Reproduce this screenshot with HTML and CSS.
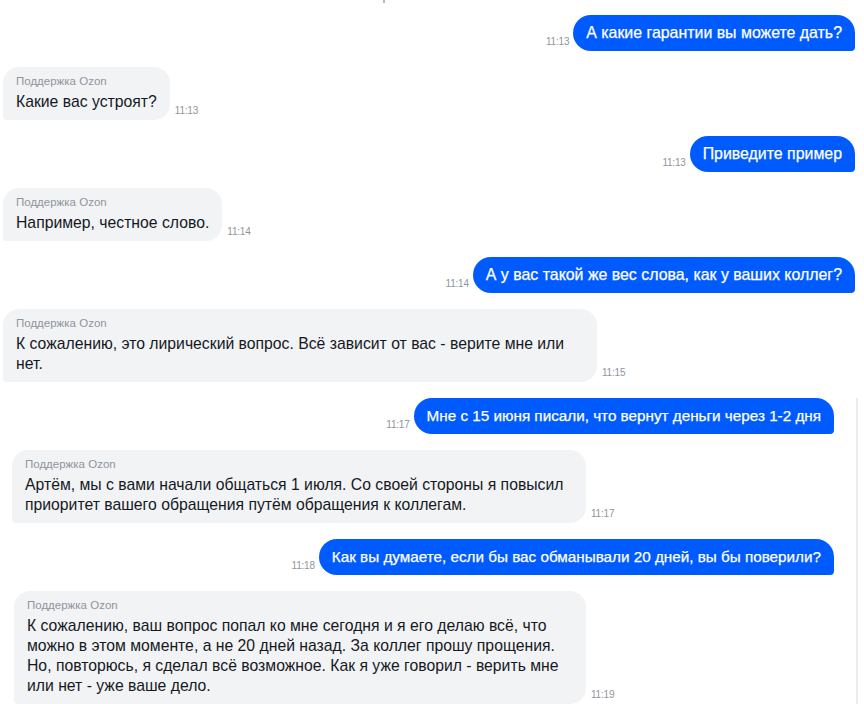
FILE: index.html
```html
<!DOCTYPE html>
<html lang="ru">
<head>
<meta charset="utf-8">
<title>Чат поддержки Ozon</title>
<link rel="stylesheet" href="styles.css">
</head>
<body>
<div class="chat">
  <div class="stub"><span class="stub-mark"></span></div>

  <div class="row out">
    <span class="time">11:13</span>
    <div class="bubble bubble-out">А какие гарантии вы можете дать?</div>
  </div>

  <div class="row in">
    <div class="bubble bubble-in">
      <div class="sender">Поддержка Ozon</div>
      <div class="text">Какие вас устроят?</div>
    </div>
    <span class="time">11:13</span>
  </div>

  <div class="row out">
    <span class="time">11:13</span>
    <div class="bubble bubble-out">Приведите пример</div>
  </div>

  <div class="row in">
    <div class="bubble bubble-in">
      <div class="sender">Поддержка Ozon</div>
      <div class="text">Например, честное слово.</div>
    </div>
    <span class="time">11:14</span>
  </div>

  <div class="row out">
    <span class="time">11:14</span>
    <div class="bubble bubble-out">А у вас такой же вес слова, как у ваших коллег?</div>
  </div>

  <div class="row in">
    <div class="bubble bubble-in wide">
      <div class="sender">Поддержка Ozon</div>
      <div class="text">К сожалению, это лирический вопрос. Всё зависит от вас - верите мне или нет.</div>
    </div>
    <span class="time">11:15</span>
  </div>

  <div class="panel">
    <div class="row out inset">
      <span class="time">11:17</span>
      <div class="bubble bubble-out compact">Мне с 15 июня писали, что вернут деньги через 1-2 дня</div>
    </div>

    <div class="row in inset-a">
      <div class="bubble bubble-in narrow">
        <div class="sender">Поддержка Ozon</div>
        <div class="text">Артём, мы с вами начали общаться 1 июля. Со своей стороны я повысил приоритет вашего обращения путём обращения к коллегам.</div>
      </div>
      <span class="time">11:17</span>
    </div>

    <div class="row out inset">
      <span class="time">11:18</span>
      <div class="bubble bubble-out compact">Как вы думаете, если бы вас обманывали 20 дней, вы бы поверили?</div>
    </div>

    <div class="row in inset-b">
      <div class="bubble bubble-in narrower">
        <div class="sender">Поддержка Ozon</div>
        <div class="text">К сожалению, ваш вопрос попал ко мне сегодня и я его делаю всё, что можно в этом моменте, а не 20 дней назад. За коллег прошу прощения. Но, повторюсь, я сделал всё возможное. Как я уже говорил - верить мне или нет - уже ваше дело.</div>
      </div>
      <span class="time">11:19</span>
    </div>
  </div>
</div>
</body>
</html>
```

FILE: styles.css
```css
html, body {
  margin: 0;
  padding: 0;
  background: #ffffff;
}

body {
  width: 864px;
  height: 704px;
  overflow: hidden;
  font-family: "Liberation Sans", Arial, sans-serif;
  color: #15191e;
}

.chat {
  display: flex;
  flex-direction: column;
  gap: 16px;
}

.stub {
  height: 0;
  display: flex;
  padding-left: 383px;
  margin-bottom: -1px;
}

.stub-mark {
  width: 2px;
  height: 3px;
  background: #b8bcc2;
}

.panel {
  display: flex;
  flex-direction: column;
  gap: 16px;
  width: 856px;
  border-right: 2px solid #ececee;
}

.row {
  display: flex;
  align-items: flex-end;
}

.row.out {
  justify-content: flex-end;
  gap: 4px;
  padding-right: 9px;
}

.row.in {
  justify-content: flex-start;
  gap: 5px;
  padding-left: 3px;
}

.row.out.inset {
  padding-right: 22px;
}

.row.in.inset-a {
  padding-left: 12px;
}

.row.in.inset-b {
  padding-left: 14px;
}

.time {
  font-size: 10px;
  line-height: 12px;
  color: #8f959c;
  margin-bottom: 3px;
  white-space: nowrap;
  letter-spacing: -0.2px;
}

.bubble {
  font-size: 15.9px;
  line-height: 20px;
}

.bubble-out {
  background: #005bff;
  color: #ffffff;
  padding: 8px 13px 7.5px;
  border-radius: 18px 18px 4px 18px;
  white-space: nowrap;
  -webkit-text-stroke: 0.25px #ffffff;
}

.bubble-out.compact {
  font-size: 15.25px;
}

.bubble-in {
  background: #f2f3f5;
  padding: 7px 13px 8.5px;
  border-radius: 16px 16px 16px 4px;
}

.bubble-in.wide {
  max-width: 568px;
}

.bubble-in.narrow {
  max-width: 548px;
}

.bubble-in.narrower {
  max-width: 546px;
}

.sender {
  font-size: 11.5px;
  line-height: 15px;
  color: #8f959c;
  margin-bottom: 3px;
}

.text {
  font-size: 15.75px;
  line-height: 20px;
}
```
